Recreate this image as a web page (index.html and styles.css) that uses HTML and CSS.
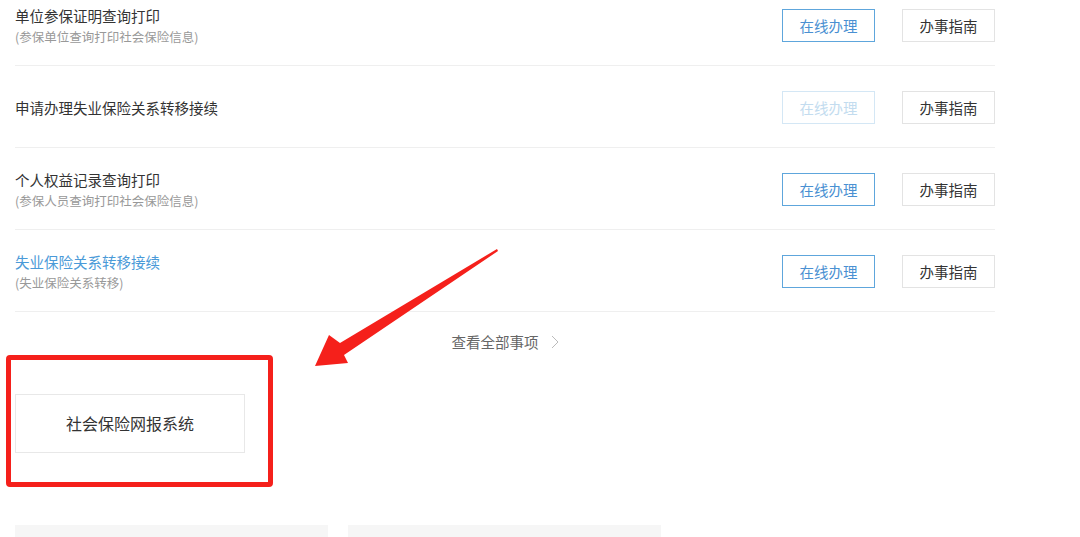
FILE: index.html
```html
<!DOCTYPE html>
<html><head>
<meta charset="utf-8">
<title>社会保险</title>
<link rel="stylesheet" href="styles.css">
</head><body>
<div class="page">
    <ul class="items">
        <li class="item">
            <div class="info">
                <div class="name">单位参保证明查询打印</div>
                <div class="desc">(参保单位查询打印社会保险信息)</div>
            </div>
            <a class="btn btn-online">在线办理</a>
            <a class="btn btn-guide">办事指南</a>
        </li>
        <li class="item">
            <div class="info">
                <div class="name">申请办理失业保险关系转移接续</div>
            </div>
            <a class="btn btn-online off">在线办理</a>
            <a class="btn btn-guide">办事指南</a>
        </li>
        <li class="item">
            <div class="info">
                <div class="name">个人权益记录查询打印</div>
                <div class="desc">(参保人员查询打印社会保险信息)</div>
            </div>
            <a class="btn btn-online">在线办理</a>
            <a class="btn btn-guide">办事指南</a>
        </li>
        <li class="item">
            <div class="info">
                <div class="name blue">失业保险关系转移接续</div>
                <div class="desc">(失业保险关系转移)</div>
            </div>
            <a class="btn btn-online">在线办理</a>
            <a class="btn btn-guide">办事指南</a>
        </li>
    </ul>

    <div class="more">查看全部事项<svg class="chev" width="8" height="14" viewBox="0 0 8 14"><polyline points="1,1 7,7 1,13" fill="none" stroke="#bbb" stroke-width="1"/></svg></div>

    <div class="sysbox">社会保险网报系统</div>

    <div class="tiles">
        <div class="tile"></div>
        <div class="tile"></div>
    </div>
</div>

<!-- annotation overlay -->
<div class="mark"></div>
<svg class="arrow" width="1080" height="537" viewBox="0 0 1080 537">
    <polygon points="497,249 340,343 329,335 315,366 348,363 344,355 498,251" fill="#f5201b"/>
</svg>
</body></html>
```

FILE: styles.css
```css
body{margin:0;padding:0;background:#fff;font-family:"Noto Sans CJK SC","Liberation Sans",sans-serif;color:#333;overflow:hidden;}
.page{padding-left:15px;width:980px;}

.items{list-style:none;margin:-16px 0 0 0;padding:0;}
.item{display:flex;align-items:center;height:79px;padding-top:2px;border-bottom:1px solid #efefef;}
.info{flex:1;}
.name{font-size:14.5px;line-height:22px;color:#333;}
.name.blue{color:#4a9ad8;}
.desc{font-size:12.5px;line-height:20px;color:#999;}

.btn{display:block;box-sizing:border-box;width:93px;height:33px;line-height:31px;text-align:center;font-size:14.5px;border:1px solid #e3e3e3;color:#333;}
.btn-online{border-color:#5ea6dc;color:#4a90d2;}
.btn-online.off{border-color:#d4e7f5;color:#c3dcef;}
.btn-guide{margin-left:27px;}

.more{height:60px;line-height:60px;text-align:center;font-size:14.5px;color:#666;}
.chev{margin-left:12px;vertical-align:-1px;}

.sysbox{margin-top:22px;box-sizing:border-box;width:230px;height:59px;line-height:57px;text-align:center;font-size:16px;color:#333;border:1px solid #e8e8e8;}

.tiles{display:flex;gap:20px;margin-top:72px;}
.tile{width:313px;height:13px;background:#f6f6f6;}

.mark{position:absolute;left:6px;top:355px;width:257px;height:122px;border:5px solid #f5201b;border-radius:4px;}
.arrow{position:absolute;left:0;top:0;pointer-events:none;}
```
